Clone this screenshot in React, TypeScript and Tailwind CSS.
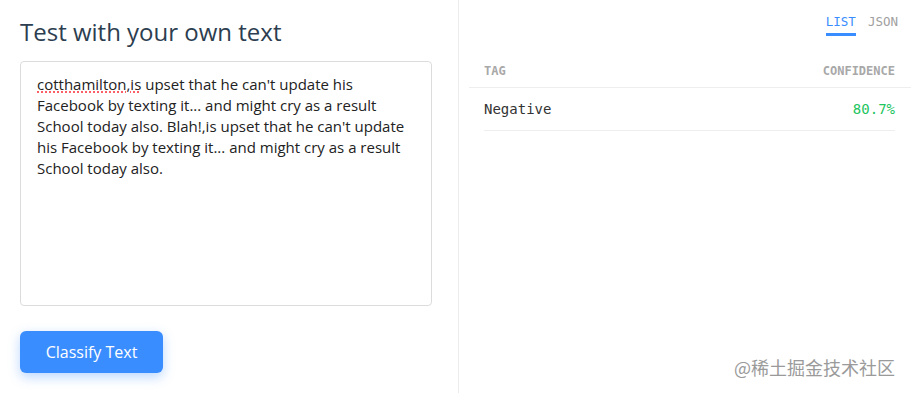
import React from 'react';

const sample =
  "cotthamilton,is upset that he can't update his Facebook by texting it... and might cry as a result School today also. Blah!,is upset that he can't update his Facebook by texting it... and might cry as a result School today also.";

export default function App() {
  return (
    <div className="flex h-[393px] w-[911px] bg-white" style={{ fontFamily: '"Open Sans", sans-serif' }}>
      {/* left: input */}
      <div className="w-[459px] border-r border-[#ececec] px-5 pt-[14px]">
        <h1 className="text-[24px] leading-[36px] text-[#2c3e50]">Test with your own text</h1>
        <div className="mt-[11px] h-[245px] w-[412px] rounded border border-[#dcdcdc] px-4 pt-[12px] text-[15px] leading-[21px] text-[#222]">
          <span className="underline decoration-dotted decoration-red-500 underline-offset-2">cotthamilton,is</span>
          {sample.slice(15)}
        </div>
        <button className="mt-[25px] h-[42px] w-[143px] rounded-md bg-[#3a8dff] text-[16px] text-white shadow-[0_4px_12px_rgba(58,141,255,0.35)]">
          Classify Text
        </button>
      </div>

      {/* right: results */}
      <div className="relative flex-1 pl-[10px] pr-[16px]" style={{ fontFamily: '"DejaVu Sans Mono", monospace' }}>
        <div className="flex justify-end gap-[12px] pt-[13px] text-[12.5px]">
          <span className="border-b-[3px] border-[#3a8dff] pb-[1px] text-[#3a8dff]">LIST</span>
          <span className="-mr-[3px] text-[#a0a0a0]">JSON</span>
        </div>
        <div className="-mr-[16px] mt-[26px] flex justify-between border-b border-[#eee] pb-[7px] pl-[15px] pr-[16px] text-[12px] font-bold text-[#a8a8a8]">
          <span>TAG</span>
          <span>CONFIDENCE</span>
        </div>
        <div className="ml-[15px] flex justify-between border-b border-[#eee] py-[11px] text-[14px] leading-[20px]">
          <span className="text-[#333]">Negative</span>
          <span className="text-[#22c55e]">80.7%</span>
        </div>
        <div
          className="absolute bottom-[12px] right-[16px] text-[18px] text-[#9a9a9a]"
          style={{ fontFamily: '"Noto Sans CJK SC", sans-serif' }}
        >
          @稀土掘金技术社区
        </div>
      </div>
    </div>
  );
}
